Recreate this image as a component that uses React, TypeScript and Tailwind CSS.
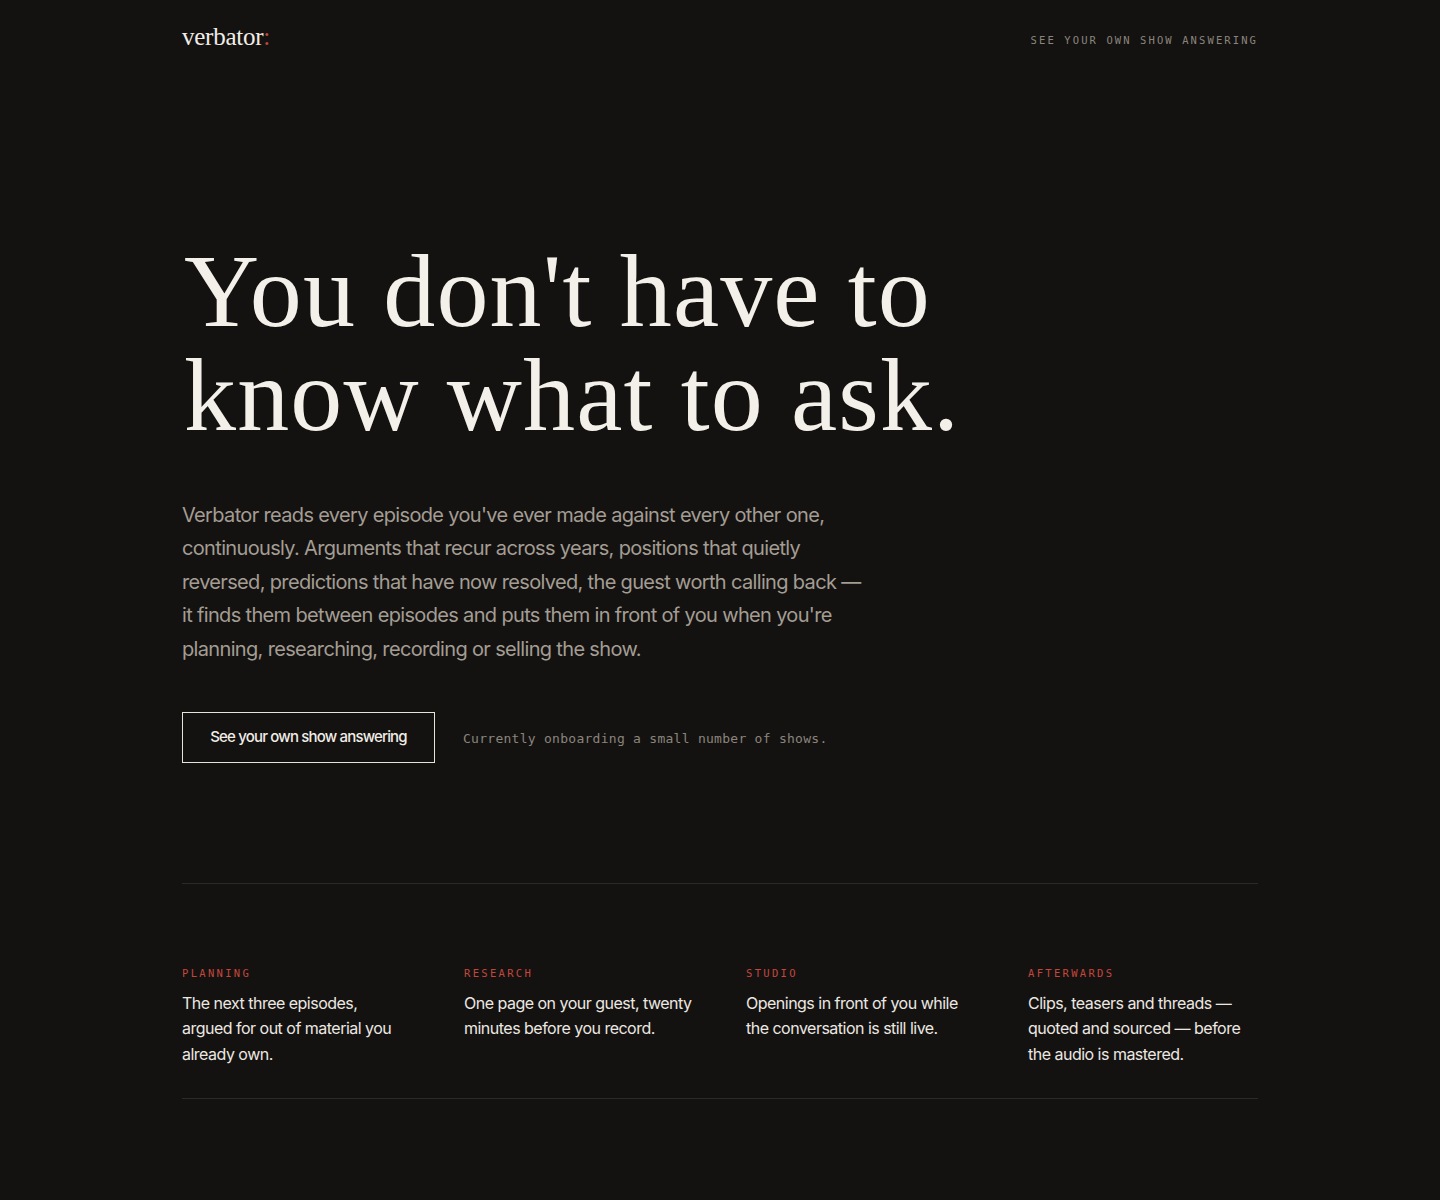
import React from "react";

const serif = "font-['Liberation_Serif','Times_New_Roman',serif]";
const sans = "font-['Inter','Noto_Sans',sans-serif]";
const mono = "font-['DejaVu_Sans_Mono','Liberation_Mono',monospace]";

const features = [
  { label: "PLANNING", text: "The next three episodes, argued for out of material you already own." },
  { label: "RESEARCH", text: "One page on your guest, twenty minutes before you record." },
  { label: "STUDIO", text: "Openings in front of you while the conversation is still live." },
  { label: "AFTERWARDS", text: "Clips, teasers and threads — quoted and sourced — before the audio is mastered." },
];

export default function App() {
  return (
    <div className="min-h-[1200px] w-full bg-[#141211] text-[#f1ede6]">
      <div className="mx-auto w-[1076px]">
        <header className="flex h-[80px] items-center justify-between">
          <div className={`${serif} text-[25px] leading-none tracking-[-0.01em] text-[#f1ede6] -mt-[8px]`}>
            verbator<span className="text-[#c4473b]">:</span>
          </div>
          <div className={`${mono} pt-[1px] text-[10.5px] tracking-[0.2em] text-[#8a857c]`}>
            SEE YOUR OWN SHOW ANSWERING
          </div>
        </header>

        <section className="pt-[159px]">
          <h1 className={`${serif} text-[104px] leading-[104px] tracking-[0.011em] text-[#f3f0ea] pl-[2px]`}>
            You don't have to
            <br />
            know what to ask.
          </h1>
          <p className={`${sans} mt-[52px] w-[690px] text-[20px] leading-[33.4px] tracking-[-0.033em] text-[#a39d93]`}>
            Verbator reads every episode you've ever made against every other one, continuously. Arguments that recur across years, positions that quietly reversed, predictions that have now resolved, the guest worth calling back — it finds them between episodes and puts them in front of you when you're planning, researching, recording or selling the show.
          </p>
          <div className="mt-[46px] flex items-center gap-[28px]">
            <button className={`${sans} h-[51px] w-[253px] border border-[#e8e4dc] text-[15px] font-medium tracking-[-0.055em] text-[#f1ede6]`}>
              See your own show answering
            </button>
            <span className={`${mono} pt-[2px] text-[13px] tracking-[0.021em] text-[#8a857c]`}>
              Currently onboarding a small number of shows.
            </span>
          </div>
        </section>

        <section className="mt-[120px] border-y border-[#2c2926] pt-[83px] pb-[31px]">
          <div className="grid grid-cols-4 gap-[52px]">
            {features.map((f) => (
              <div key={f.label}>
                <div className={`${mono} text-[10.5px] tracking-[0.22em] text-[#c4473b] -mt-[1px]`}>{f.label}</div>
                <p className={`${sans} mt-[9px] w-[228px] text-[16px] leading-[25.5px] tracking-[-0.032em] text-[#ece8e1]`}>
                  {f.text}
                </p>
              </div>
            ))}
          </div>
        </section>
      </div>
    </div>
  );
}
